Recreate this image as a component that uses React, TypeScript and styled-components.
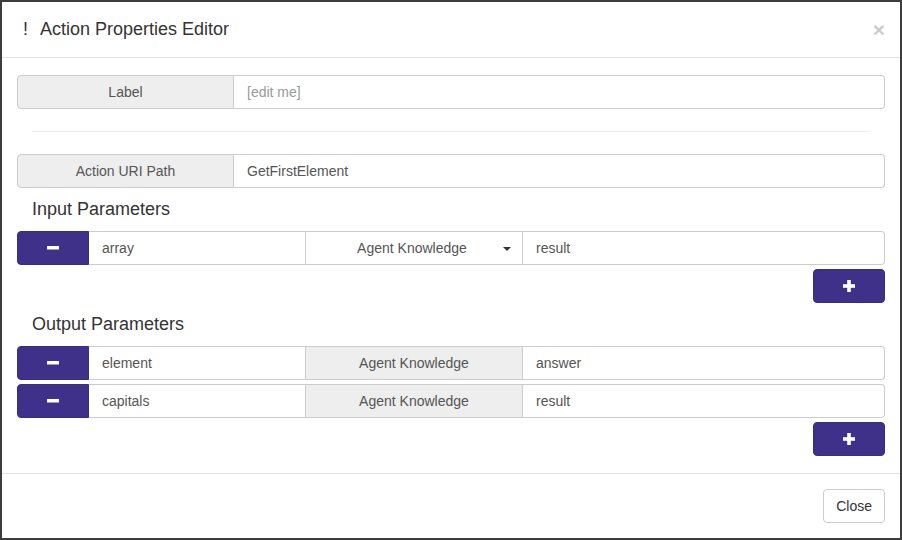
import React from "react";
import styled, { createGlobalStyle } from "styled-components";

const Global = createGlobalStyle`
  html, body { margin: 0; padding: 0; }
  body {
    background: #3d3d3d;
    font-family: "Liberation Sans", Arial, sans-serif;
    font-size: 14px;
    color: #333;
  }
  * { box-sizing: border-box; }
`;

const Frame = styled.div`
  width: 902px;
  height: 540px;
  padding: 2px 2px 2px 2px;
`;

const Modal = styled.div`
  width: 898px;
  height: 536px;
  background: #fff;
  display: flex;
  flex-direction: column;
`;

const Header = styled.div`
  display: flex;
  align-items: center;
  justify-content: space-between;
  padding: 15px;
  border-bottom: 1px solid #e5e5e5;
  height: 56px;
`;

const Title = styled.h4`
  margin: 0;
  font-size: 18px;
  font-weight: normal;
  line-height: 25px;
  color: #333;
  display: flex;
  align-items: center;
`;

const Bang = styled.span`
  display: inline-block;
  width: 23px;
  padding-left: 6px;
  color: #2b2b3a;
`;

const CloseX = styled.button`
  border: 0;
  background: none;
  padding: 0;
  font-family: "Liberation Sans", Arial, sans-serif;
  font-size: 21px;
  font-weight: bold;
  line-height: 1;
  color: #000;
  opacity: 0.2;
  cursor: pointer;
`;

const Body = styled.div`
  flex: 1;
  padding: 17px 15px 17px;
  display: flex;
  flex-direction: column;
`;

const Divider = styled.hr`
  margin: 22px 15px;
  border: 0;
  border-top: 1px solid #eee;
  height: 0;
`;

const Group = styled.div<{ $gap?: number }>`
  display: flex;
  height: 34px;
  margin-top: ${(p) => p.$gap ?? 0}px;
`;

const Cell = styled.div<{ $w?: number }>`
  ${(p) => (p.$w ? `flex: 0 0 ${p.$w}px;` : "flex: 1;")}
  height: 34px;
  border: 1px solid #ccc;
  border-left: none;
  display: flex;
  align-items: center;
  font-size: 14px;
  color: #555;
  white-space: nowrap;
  &:first-child {
    border-left: 1px solid #ccc;
    border-radius: 4px 0 0 4px;
  }
  &:last-child {
    border-radius: 0 4px 4px 0;
  }
`;

const Addon = styled(Cell)`
  background: #eee;
  justify-content: center;
`;

const Field = styled(Cell)<{ $placeholder?: boolean }>`
  background: #fff;
  padding: 0 12px 0 13px;
  color: ${(p) => (p.$placeholder ? "#999" : "#555")};
`;

const SelectBox = styled(Cell)`
  background: #fff;
  justify-content: center;
  position: relative;
  padding-right: 4px;
`;

const Caret = styled.span`
  position: absolute;
  right: 11px;
  top: 15px;
  width: 0;
  height: 0;
  border-top: 4px solid #333;
  border-left: 4px solid transparent;
  border-right: 4px solid transparent;
`;

const PurpleBtn = styled.button<{ $w: number }>`
  flex: 0 0 ${(p) => p.$w}px;
  width: ${(p) => p.$w}px;
  height: 34px;
  background: #3f3189;
  border: 1px solid #3a2d80;
  border-radius: 4px;
  display: flex;
  align-items: center;
  justify-content: center;
  padding: 0;
  cursor: pointer;
`;

const MinusBtn = styled(PurpleBtn)`
  border-radius: 4px 0 0 4px;
`;

const AddRow = styled.div`
  display: flex;
  justify-content: flex-end;
  margin-top: 4px;
`;

const SectionTitle = styled.h4`
  margin: 0;
  height: 43px;
  display: flex;
  align-items: center;
  padding-left: 15px;
  font-size: 18px;
  font-weight: normal;
  color: #333;
`;

const Footer = styled.div`
  border-top: 1px solid #e5e5e5;
  padding: 15px;
  display: flex;
  justify-content: flex-end;
`;

const DefaultBtn = styled.button`
  height: 34px;
  padding: 6px 12px;
  background: #fff;
  border: 1px solid #ccc;
  border-radius: 4px;
  font-family: "Liberation Sans", Arial, sans-serif;
  font-size: 14px;
  color: #333;
  cursor: pointer;
`;

const MinusIcon = () => (
  <svg width="12" height="4" viewBox="0 0 12 4">
    <rect x="0" y="0" width="12" height="3.5" fill="#fff" />
  </svg>
);

const PlusIcon = () => (
  <svg width="12" height="12" viewBox="0 0 12 12">
    <rect x="4.2" y="0" width="3.6" height="12" fill="#fff" />
    <rect x="0" y="4.2" width="12" height="3.6" fill="#fff" />
  </svg>
);

type Param = { name: string; source: string; value: string };

const inputs: Param[] = [{ name: "array", source: "Agent Knowledge", value: "result" }];
const outputs: Param[] = [
  { name: "element", source: "Agent Knowledge", value: "answer" },
  { name: "capitals", source: "Agent Knowledge", value: "result" },
];

export default function App() {
  return (
    <>
      <Global />
      <Frame>
        <Modal>
          <Header>
            <Title>
              <Bang>!</Bang>Action Properties Editor
            </Title>
            <CloseX aria-label="close">×</CloseX>
          </Header>
          <Body>
            <Group>
              <Addon $w={217}>Label</Addon>
              <Field $placeholder>[edit me]</Field>
            </Group>
            <Divider />
            <Group>
              <Addon $w={217}>Action URI Path</Addon>
              <Field>GetFirstElement</Field>
            </Group>
            <SectionTitle>Input Parameters</SectionTitle>
            {inputs.map((p, i) => (
              <Group key={p.name} $gap={i ? 4 : 0}>
                <MinusBtn $w={72}>
                  <MinusIcon />
                </MinusBtn>
                <Field $w={217}>{p.name}</Field>
                <SelectBox $w={217}>
                  {p.source}
                  <Caret />
                </SelectBox>
                <Field>{p.value}</Field>
              </Group>
            ))}
            <AddRow>
              <PurpleBtn $w={72}>
                <PlusIcon />
              </PurpleBtn>
            </AddRow>
            <SectionTitle>Output Parameters</SectionTitle>
            {outputs.map((p, i) => (
              <Group key={p.name} $gap={i ? 4 : 0}>
                <MinusBtn $w={72}>
                  <MinusIcon />
                </MinusBtn>
                <Field $w={217}>{p.name}</Field>
                <Addon $w={217}>{p.source}</Addon>
                <Field>{p.value}</Field>
              </Group>
            ))}
            <AddRow>
              <PurpleBtn $w={72}>
                <PlusIcon />
              </PurpleBtn>
            </AddRow>
          </Body>
          <Footer>
            <DefaultBtn>Close</DefaultBtn>
          </Footer>
        </Modal>
      </Frame>
    </>
  );
}
